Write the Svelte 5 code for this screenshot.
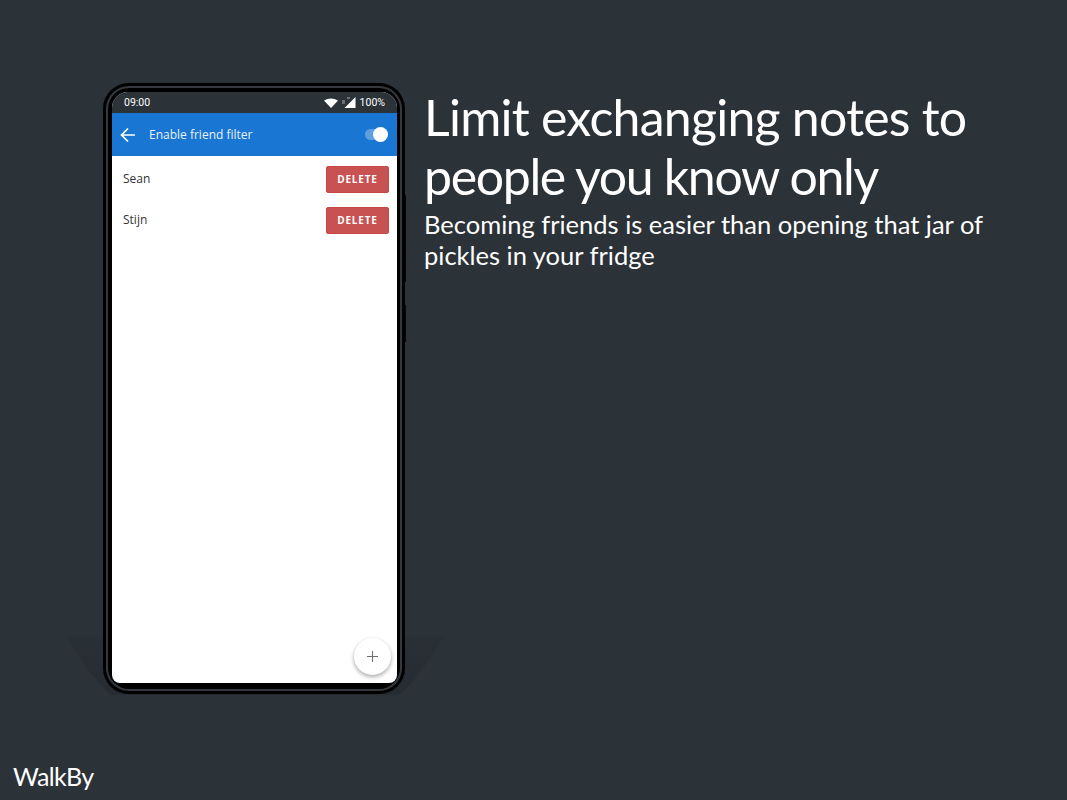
<script>
  let friends = ["Sean", "Stijn"];
</script>

<main class="page">
  <div class="device-col">
    <svg class="floor" width="380" height="60" viewBox="0 0 380 60">
      <defs>
        <linearGradient id="fade" x1="0" y1="0" x2="0" y2="1">
          <stop offset="0" stop-color="#293036" />
          <stop offset="1" stop-color="#262c31" />
        </linearGradient>
      </defs>
      <path d="M0 0H380Q360 35 335 60H45Q20 35 0 0Z" fill="url(#fade)" />
    </svg>
    <span class="side-btn one"></span>
    <span class="side-btn two"></span>
    <div class="phone">
      <div class="screen">
        <div class="statusbar">
          <span>09:00</span>
          <div class="status-right">
            <svg width="14" height="10" viewBox="0 0 14 10"><path d="M0 2.6Q7-1.6 14 2.6L7 10Z" fill="#fff" /></svg>
            <svg width="14" height="11" viewBox="0 0 14 11"><path d="M13.5 0V11H2.5Z" fill="#fff" /><path d="M0 4h3M0 6h3M5 1h3" stroke="#aaa" stroke-width="1" /></svg>
            <span class="pct">100%</span>
          </div>
        </div>
        <header class="appbar">
          <svg class="back" width="16" height="16" viewBox="0 0 16 16"><path d="M15 8H2M8 1.5L1.5 8 8 14.5" fill="none" stroke="#fff" stroke-width="1.7" /></svg>
          <span class="title">Enable friend filter</span>
          <div class="toggle"><span class="knob"></span></div>
        </header>
        <ul class="list">
          {#each friends as name}
            <li>
              <span class="name">{name}</span>
              <button class="delete">DELETE</button>
            </li>
          {/each}
        </ul>
        <button class="fab" aria-label="add">
          <svg width="11" height="11" viewBox="0 0 11 11"><path d="M5.5 0V11M0 5.5H11" stroke="#6f6f6f" stroke-width="1.1" /></svg>
        </button>
      </div>
    </div>
  </div>
  <section class="copy">
    <h1>Limit exchanging notes to<br /><span class="tight">people you know only</span></h1>
    <p>Becoming friends is easier than opening that jar of<br />pickles in your fridge</p>
  </section>
  <div class="brand">WalkBy</div>
</main>

<style>
  :global(body) {
    margin: 0;
    background: #2b3238;
  }
  .page {
    position: relative;
    width: 1067px;
    height: 800px;
    overflow: hidden;
    display: flex;
    align-items: flex-start;
    background: #2b3238;
    font-family: Lato, sans-serif;
    color: #fff;
  }
  .device-col {
    position: relative;
    margin: 83px 0 0 103px;
  }
  .floor {
    position: absolute;
    left: -38px;
    top: 552px;
  }
  .side-btn {
    position: absolute;
    left: 300px;
    width: 3px;
    background: #050505;
  }
  .side-btn.one {
    top: 112px;
    height: 87px;
  }
  .side-btn.two {
    top: 222px;
    height: 37px;
  }
  .phone {
    position: relative;
    box-sizing: border-box;
    width: 302px;
    height: 611px;
    padding: 9px;
    border-radius: 26px;
    background: #000;
    box-shadow: inset 0 0 0 3px #000, inset 0 0 0 5px #33393f;
  }
  .screen {
    position: relative;
    height: 591px;
    width: 285px;
    border-radius: 16px 16px 8px 8px;
    overflow: hidden;
    background: #fff;
    font-family: Roboto, sans-serif;
  }
  .statusbar {
    height: 21px;
    background: #2b3238;
    display: flex;
    align-items: center;
    justify-content: space-between;
    padding: 0 12px;
    font-size: 10.5px;
  }
  .status-right {
    display: flex;
    align-items: center;
    gap: 4px;
  }
  .pct {
    margin-left: 0;
  }
  .appbar {
    height: 43px;
    background: #1976d2;
    display: flex;
    align-items: center;
    padding: 0 10px 0 8px;
  }
  .back {
    margin-right: 13px;
  }
  .title {
    font-family: "Open Sans", sans-serif;
    font-size: 12px;
    flex: 1;
    color: #e9f1fa;
  }
  .toggle {
    position: relative;
    width: 22px;
    height: 11px;
    border-radius: 6px;
    background: #5f9fe2;
  }
  .knob {
    position: absolute;
    right: -1px;
    top: -2px;
    width: 15px;
    height: 15px;
    border-radius: 50%;
    background: #fff;
  }
  .list {
    list-style: none;
    margin: 0;
    padding: 10px 8px 0 11px;
    display: flex;
    flex-direction: column;
    gap: 14px;
    color: #333;
    font-family: "Open Sans", sans-serif;
    font-size: 12px;
  }
  .list li {
    display: flex;
    align-items: center;
    justify-content: space-between;
    height: 27px;
  }
  .name {
    padding-bottom: 2px;
  }
  .delete {
    width: 63px;
    height: 27px;
    border: 1px solid #c94747;
    border-radius: 2px;
    background: #c85151;
    color: #fff;
    font: 700 10px/24px "Open Sans", sans-serif;
    letter-spacing: 0.8px;
    padding: 0 0 1px;
  }
  .fab {
    position: absolute;
    right: 6px;
    bottom: 8px;
    width: 37px;
    height: 37px;
    border: 0;
    border-radius: 50%;
    background: #fff;
    box-shadow: 0 2px 4px rgba(0, 0, 0, 0.35);
    display: flex;
    align-items: center;
    justify-content: center;
    padding: 0;
  }
  .copy {
    margin: 88px 0 0 19px;
  }
  h1 {
    margin: 0;
    font-weight: 400;
    font-size: 50px;
    line-height: 59px;
    letter-spacing: -0.75px;
  }
  .tight {
    letter-spacing: -1.35px;
  }
  p {
    margin: 3px 0 0 0;
    font-size: 25.5px;
    line-height: 31px;
  }
  .brand {
    position: absolute;
    left: 13px;
    bottom: 9px;
    font-size: 25px;
    line-height: 30px;
    letter-spacing: -0.6px;
  }
</style>
